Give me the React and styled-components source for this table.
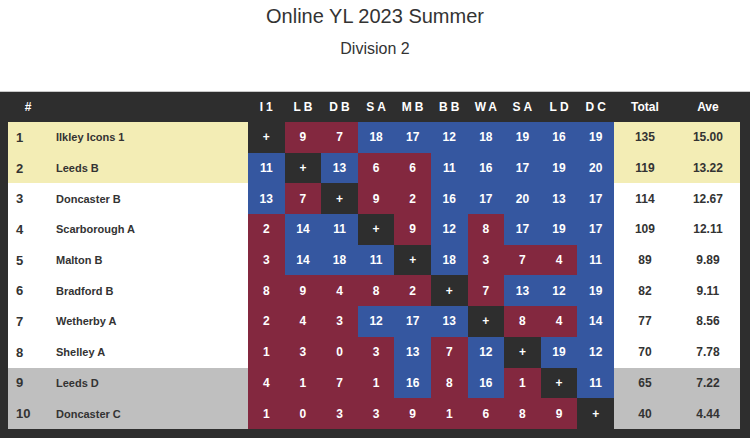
import React from "react";
import styled, { createGlobalStyle } from "styled-components";

const Global = createGlobalStyle`
  html, body { margin: 0; padding: 0; background: #fff; }
  body { font-family: "Liberation Sans", Arial, sans-serif; color: #333; }
`;

const Page = styled.div`
  width: 750px;
  display: flex;
  flex-direction: column;
  align-items: stretch;
`;

const Title = styled.h1`
  margin: 4px 0 0;
  font-size: 20px;
  font-weight: normal;
  line-height: 24px;
  text-align: center;
  color: #333;
`;

const Subtitle = styled.h2`
  margin: 12px 0 0;
  font-size: 16px;
  font-weight: normal;
  line-height: 18px;
  text-align: center;
  color: #333;
`;

const Board = styled.div`
  margin-top: 33px;
  background: #2e2e2e;
  border-top: 1px solid #c8c8c8;
  padding: 0 10px 9px 8px;
  display: grid;
  grid-template-columns: 40px 200px repeat(10, 36.6px) 62px 64px;
  grid-auto-rows: 30.7px;
  grid-template-rows: 30px;
`;

const Head = styled.div`
  display: flex;
  align-items: center;
  justify-content: center;
  color: #fff;
  font-weight: bold;
  font-size: 12px;
  letter-spacing: ${(p) => (p.$spaced ? "3px" : "0")};
  text-indent: ${(p) => (p.$spaced ? "3px" : "0")};
`;

const bg = { top: "#f3edb5", mid: "#ffffff", low: "#bfbfbf" };

const Info = styled.div`
  display: flex;
  align-items: center;
  justify-content: ${(p) => (p.$center ? "center" : "flex-start")};
  padding-left: ${(p) => (p.$center ? "0" : "8px")};
  background: ${(p) => bg[p.$band]};
  color: #333;
  font-weight: bold;
  font-size: ${(p) => p.$size || "12px"};
`;

const cellColor = { win: "#3557a0", loss: "#83283f", self: "#2e2e2e" };

const Cell = styled.div`
  display: flex;
  align-items: center;
  justify-content: center;
  background: ${(p) => cellColor[p.$kind]};
  color: #fff;
  font-weight: bold;
  font-size: 12px;
`;

const codes = ["I1", "LB", "DB", "SA", "MB", "BB", "WA", "SA", "LD", "DC"];

const teams = [
  ["Ilkley Icons 1", [null, 9, 7, 18, 17, 12, 18, 19, 16, 19], 135, "15.00"],
  ["Leeds B", [11, null, 13, 6, 6, 11, 16, 17, 19, 20], 119, "13.22"],
  ["Doncaster B", [13, 7, null, 9, 2, 16, 17, 20, 13, 17], 114, "12.67"],
  ["Scarborough A", [2, 14, 11, null, 9, 12, 8, 17, 19, 17], 109, "12.11"],
  ["Malton B", [3, 14, 18, 11, null, 18, 3, 7, 4, 11], 89, "9.89"],
  ["Bradford B", [8, 9, 4, 8, 2, null, 7, 13, 12, 19], 82, "9.11"],
  ["Wetherby A", [2, 4, 3, 12, 17, 13, null, 8, 4, 14], 77, "8.56"],
  ["Shelley A", [1, 3, 0, 3, 13, 7, 12, null, 19, 12], 70, "7.78"],
  ["Leeds D", [4, 1, 7, 1, 16, 8, 16, 1, null, 11], 65, "7.22"],
  ["Doncaster C", [1, 0, 3, 3, 9, 1, 6, 8, 9, null], 40, "4.44"],
];

const band = (i) => (i < 2 ? "top" : i >= 8 ? "low" : "mid");

export default function App() {
  return (
    <Page>
      <Global />
      <Title>Online YL 2023 Summer</Title>
      <Subtitle>Division 2</Subtitle>
      <Board>
        <Head>#</Head>
        <Head />
        {codes.map((c, i) => (
          <Head key={i} $spaced>
            {c}
          </Head>
        ))}
        <Head>Total</Head>
        <Head>Ave</Head>
        {teams.map(([name, res, total, ave], i) => (
          <React.Fragment key={name}>
            <Info $band={band(i)} $size="13px">
              {i + 1}
            </Info>
            <Info $band={band(i)} $size="11px">
              {name}
            </Info>
            {res.map((v, j) => (
              <Cell
                key={j}
                $kind={v === null ? "self" : v > 10 ? "win" : "loss"}
              >
                {v === null ? "+" : v}
              </Cell>
            ))}
            <Info $band={band(i)} $center $size="12px">
              {total}
            </Info>
            <Info $band={band(i)} $center $size="12px">
              {ave}
            </Info>
          </React.Fragment>
        ))}
      </Board>
    </Page>
  );
}
